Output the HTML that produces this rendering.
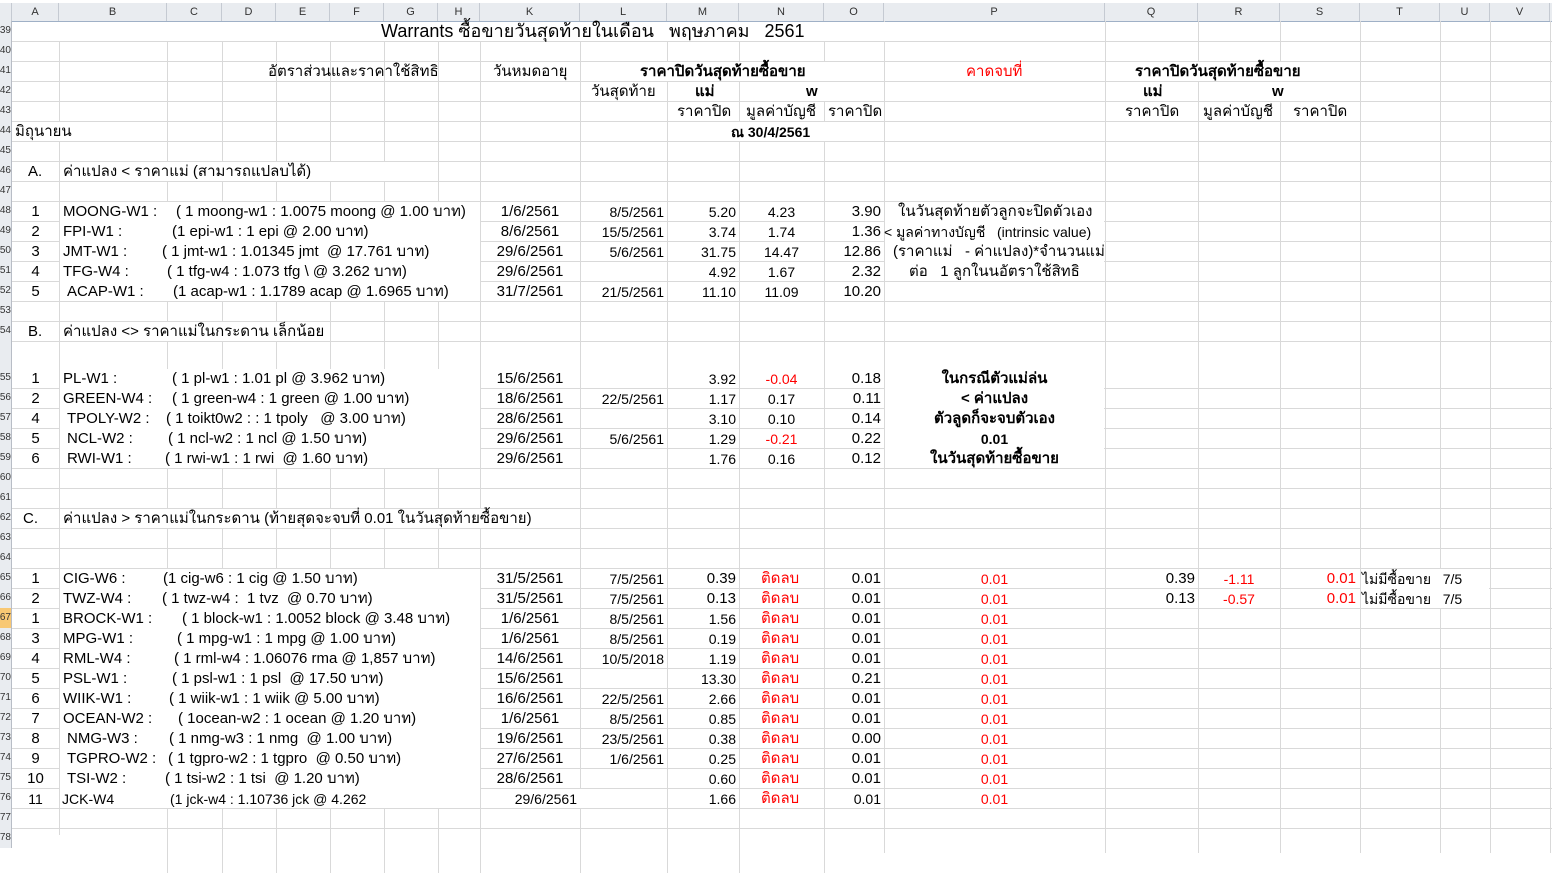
<!DOCTYPE html>
<html><head><meta charset="utf-8"><style>
body{margin:0;width:1552px;height:835px;overflow:hidden;background:#fff;position:relative;font-family:"Liberation Sans","DejaVu Sans",sans-serif;color:#000}
.v{position:absolute;top:3px;width:1px;height:832px;background:#d9d9d9}
.h{position:absolute;left:0;width:1552px;height:1px;background:#d9d9d9}
.t{position:absolute;height:20px;line-height:22px;font-size:15px;white-space:pre}
.n{font-size:14px}
.b{font-weight:bold}
.r{color:#f00}
.ch{position:absolute;top:3px;height:18px;line-height:19px;font-size:11px;color:#333;text-align:center;background:#e9ecf0;border-right:1px solid #c5cad2}
.rh{position:absolute;left:0;width:11px;height:20px;line-height:20px;font-size:10px;color:#333;background:#e9ecf0;border-right:1px solid #b8bdc6;overflow:hidden;text-align:right;direction:rtl}
</style></head><body>
<div style="position:absolute;left:0;top:0;width:1552px;height:3px;background:#fff;border-bottom:1px solid #a0a0a0"></div>
<div style="position:absolute;left:0;top:3px;width:1552px;height:18px;background:#e9ecf0;border-bottom:1px solid #9fb0c6"></div>
<div class="ch" style="left:0;width:11px"></div>
<div class="ch" style="left:12px;width:46px">A</div>
<div class="ch" style="left:59px;width:107px">B</div>
<div class="ch" style="left:167px;width:54px">C</div>
<div class="ch" style="left:222px;width:53px">D</div>
<div class="ch" style="left:276px;width:53px">E</div>
<div class="ch" style="left:330px;width:53px">F</div>
<div class="ch" style="left:384px;width:53px">G</div>
<div class="ch" style="left:438px;width:41px">H</div>
<div class="ch" style="left:480px;width:99px">K</div>
<div class="ch" style="left:580px;width:86px">L</div>
<div class="ch" style="left:667px;width:71px">M</div>
<div class="ch" style="left:739px;width:84px">N</div>
<div class="ch" style="left:824px;width:59px">O</div>
<div class="ch" style="left:884px;width:220px">P</div>
<div class="ch" style="left:1105px;width:92px">Q</div>
<div class="ch" style="left:1198px;width:81px">R</div>
<div class="ch" style="left:1280px;width:79px">S</div>
<div class="ch" style="left:1360px;width:79px">T</div>
<div class="ch" style="left:1440px;width:49px">U</div>
<div class="ch" style="left:1490px;width:59px">V</div>

<div class="v" style="left:59px;top:41px;height:794px"></div>
<div class="v" style="left:167px;top:41px"></div>
<div class="v" style="left:222px;top:41px"></div>
<div class="v" style="left:276px;top:41px"></div>
<div class="v" style="left:330px;top:41px"></div>
<div class="v" style="left:384px;top:41px"></div>
<div class="v" style="left:438px;top:41px"></div>
<div class="v" style="left:480px;top:41px"></div>
<div class="v" style="left:580px;top:41px"></div>
<div class="v" style="left:667px;top:41px"></div>
<div class="v" style="left:739px;top:41px"></div>
<div class="v" style="left:824px;top:41px"></div>
<div class="v" style="left:884px;top:21px"></div>
<div class="v" style="left:1105px;top:21px"></div>
<div class="v" style="left:1198px;top:21px"></div>
<div class="v" style="left:1280px;top:21px"></div>
<div class="v" style="left:1360px;top:21px"></div>
<div class="v" style="left:1440px;top:21px"></div>
<div class="v" style="left:1490px;top:21px"></div>
<div class="v" style="left:1550px;top:21px"></div>

<div class="h" style="top:41px"></div><div class="h" style="top:61px"></div><div class="h" style="top:81px"></div><div class="h" style="top:101px"></div><div class="h" style="top:121px"></div><div class="h" style="top:141px"></div><div class="h" style="top:161px"></div><div class="h" style="top:181px"></div><div class="h" style="top:201px"></div><div class="h" style="top:221px"></div><div class="h" style="top:241px"></div><div class="h" style="top:261px"></div><div class="h" style="top:281px"></div><div class="h" style="top:301px"></div><div class="h" style="top:321px"></div><div class="h" style="top:341px"></div><div class="h" style="top:388px"></div><div class="h" style="top:408px"></div><div class="h" style="top:428px"></div><div class="h" style="top:448px"></div><div class="h" style="top:468px"></div><div class="h" style="top:488px"></div><div class="h" style="top:508px"></div><div class="h" style="top:528px"></div><div class="h" style="top:548px"></div><div class="h" style="top:568px"></div><div class="h" style="top:588px"></div><div class="h" style="top:608px"></div><div class="h" style="top:628px"></div><div class="h" style="top:648px"></div><div class="h" style="top:668px"></div><div class="h" style="top:688px"></div><div class="h" style="top:708px"></div><div class="h" style="top:728px"></div><div class="h" style="top:748px"></div><div class="h" style="top:768px"></div><div class="h" style="top:788px"></div><div class="h" style="top:808px"></div><div class="h" style="top:828px"></div>

<div class="rh" style="top:21px">39</div><div class="rh" style="top:41px">40</div><div class="rh" style="top:61px">41</div><div class="rh" style="top:81px">42</div><div class="rh" style="top:101px">43</div><div class="rh" style="top:121px">44</div><div class="rh" style="top:141px">45</div><div class="rh" style="top:161px">46</div><div class="rh" style="top:181px">47</div><div class="rh" style="top:201px">48</div><div class="rh" style="top:221px">49</div><div class="rh" style="top:241px">50</div><div class="rh" style="top:261px">51</div><div class="rh" style="top:281px">52</div><div class="rh" style="top:301px">53</div><div class="rh" style="top:321px">54</div><div class="rh" style="top:341px;height:47px;line-height:74px">55</div><div class="rh" style="top:388px">56</div><div class="rh" style="top:408px">57</div><div class="rh" style="top:428px">58</div><div class="rh" style="top:448px">59</div><div class="rh" style="top:468px">60</div><div class="rh" style="top:488px">61</div><div class="rh" style="top:508px">62</div><div class="rh" style="top:528px">63</div><div class="rh" style="top:548px">64</div><div class="rh" style="top:568px">65</div><div class="rh" style="top:588px">66</div><div class="rh" style="top:608px;background:#f8c874">67</div><div class="rh" style="top:628px">68</div><div class="rh" style="top:648px">69</div><div class="rh" style="top:668px">70</div><div class="rh" style="top:688px">71</div><div class="rh" style="top:708px">72</div><div class="rh" style="top:728px">73</div><div class="rh" style="top:748px">74</div><div class="rh" style="top:768px">75</div><div class="rh" style="top:788px">76</div><div class="rh" style="top:808px">77</div><div class="rh" style="top:828px">78</div>

<div style="position:absolute;left:13px;top:22px;width:1090px;height:19px;background:#fff"></div>
<div class="t" style="left:381px;top:20px;font-size:18px">Warrants ซื้อขายวันสุดท้ายในเดือน   พฤษภาคม   2561</div>
<div class="t" style="left:268px;top:61px">อัตราส่วนและราคาใช้สิทธิ</div>
<div class="t" style="left:493px;top:61px">วันหมดอายุ</div>
<div style="position:absolute;left:581px;top:62px;width:302px;height:19px;background:#fff"></div>
<div class="t b" style="left:640px;top:61px">ราคาปิดวันสุดท้ายซื้อขาย</div>
<div class="t r" style="left:966px;top:61px">คาดจบที่</div>
<div style="position:absolute;left:1106px;top:62px;width:253px;height:19px;background:#fff"></div>
<div class="t b" style="left:1135px;top:61px">ราคาปิดวันสุดท้ายซื้อขาย</div>
<div class="t" style="left:591px;top:81px">วันสุดท้าย</div>
<div style="position:absolute;left:740px;top:82px;width:143px;height:19px;background:#fff"></div>
<div class="t b" style="left:695px;top:81px">แม่</div>
<div class="t b" style="left:806px;top:81px">w</div>
<div class="t b" style="left:1143px;top:81px">แม่</div>
<div style="position:absolute;left:1199px;top:82px;width:160px;height:19px;background:#fff"></div>
<div class="t b" style="left:1272px;top:81px">w</div>
<div class="t" style="left:677px;top:101px">ราคาปิด</div>
<div class="t" style="left:746px;top:101px">มูลค่าบัญชี</div>
<div class="t" style="left:828px;top:101px">ราคาปิด</div>
<div class="t" style="left:1125px;top:101px">ราคาปิด</div>
<div class="t" style="left:1203px;top:101px">มูลค่าบัญชี</div>
<div class="t" style="left:1293px;top:101px">ราคาปิด</div>
<div style="position:absolute;left:13px;top:122px;width:120px;height:19px;background:#fff"></div>
<div class="t" style="left:15px;top:121px">มิถุนายน</div>
<div style="position:absolute;left:668px;top:122px;width:215px;height:19px;background:#fff"></div>
<div class="t b n" style="left:731px;top:121px">ณ 30/4/2561</div>

<div style="position:absolute;left:60px;top:162px;width:360px;height:19px;background:#fff"></div>
<div class="t" style="left:28px;top:161px">A.</div>
<div class="t" style="left:63px;top:161px">ค่าแปลง &lt; ราคาแม่ (สามารถแปลบได้)</div>

<div style="position:absolute;left:60px;top:202px;width:420px;height:99px;background:#fff"></div>
<div style="position:absolute;left:885px;top:202px;width:219px;height:79px;background:#fff"></div>

<div class="t" style="left:12px;width:47px;text-align:center;top:201px">1</div>
<div class="t" style="left:12px;width:47px;text-align:center;top:221px">2</div>
<div class="t" style="left:12px;width:47px;text-align:center;top:241px">3</div>
<div class="t" style="left:12px;width:47px;text-align:center;top:261px">4</div>
<div class="t" style="left:12px;width:47px;text-align:center;top:281px">5</div>
<div class="t" style="left:63px;top:201px">MOONG-W1 :</div><div class="t" style="left:176px;top:201px">( 1 moong-w1 : 1.0075 moong @ 1.00 บาท)</div>
<div class="t" style="left:63px;top:221px">FPI-W1 :</div><div class="t" style="left:172px;top:221px">(1 epi-w1 : 1 epi @ 2.00 บาท)</div>
<div class="t" style="left:63px;top:241px">JMT-W1 :</div><div class="t" style="left:162px;top:241px">( 1 jmt-w1 : 1.01345 jmt  @ 17.761 บาท)</div>
<div class="t" style="left:63px;top:261px">TFG-W4 :</div><div class="t" style="left:167px;top:261px">( 1 tfg-w4 : 1.073 tfg \ @ 3.262 บาท)</div>
<div class="t" style="left:67px;top:281px">ACAP-W1 :</div><div class="t" style="left:173px;top:281px">(1 acap-w1 : 1.1789 acap @ 1.6965 บาท)</div>

<div class="t" style="left:480px;width:100px;text-align:center;top:201px">1/6/2561</div>
<div class="t" style="left:480px;width:100px;text-align:center;top:221px">8/6/2561</div>
<div class="t" style="left:480px;width:100px;text-align:center;top:241px">29/6/2561</div>
<div class="t" style="left:480px;width:100px;text-align:center;top:261px">29/6/2561</div>
<div class="t" style="left:480px;width:100px;text-align:center;top:281px">31/7/2561</div>
<div class="t n" style="left:580px;width:84px;text-align:right;top:201px">8/5/2561</div>
<div class="t n" style="left:580px;width:84px;text-align:right;top:221px">15/5/2561</div>
<div class="t n" style="left:580px;width:84px;text-align:right;top:241px">5/6/2561</div>
<div class="t n" style="left:580px;width:84px;text-align:right;top:281px">21/5/2561</div>
<div class="t n" style="left:667px;width:69px;text-align:right;top:201px">5.20</div>
<div class="t n" style="left:667px;width:69px;text-align:right;top:221px">3.74</div>
<div class="t n" style="left:667px;width:69px;text-align:right;top:241px">31.75</div>
<div class="t n" style="left:667px;width:69px;text-align:right;top:261px">4.92</div>
<div class="t n" style="left:667px;width:69px;text-align:right;top:281px">11.10</div>
<div class="t n" style="left:739px;width:85px;text-align:center;top:201px">4.23</div>
<div class="t n" style="left:739px;width:85px;text-align:center;top:221px">1.74</div>
<div class="t n" style="left:739px;width:85px;text-align:center;top:241px">14.47</div>
<div class="t n" style="left:739px;width:85px;text-align:center;top:261px">1.67</div>
<div class="t n" style="left:739px;width:85px;text-align:center;top:281px">11.09</div>
<div class="t" style="left:824px;width:57px;text-align:right;top:201px">3.90</div>
<div class="t" style="left:824px;width:57px;text-align:right;top:221px">1.36</div>
<div class="t" style="left:824px;width:57px;text-align:right;top:241px">12.86</div>
<div class="t" style="left:824px;width:57px;text-align:right;top:261px">2.32</div>
<div class="t" style="left:824px;width:57px;text-align:right;top:281px">10.20</div>
<div class="t" style="left:898px;top:201px">ในวันสุดท้ายตัวลูกจะปิดตัวเอง</div>
<div class="t n" style="left:884px;top:221px">&lt; มูลค่าทางบัญชี   (intrinsic value)</div>
<div class="t" style="left:893px;top:241px">(ราคาแม่   - ค่าแปลง)*จำนวนแม่</div>
<div class="t" style="left:909px;top:261px">ต่อ   1 ลูกในนอัตราใช้สิทธิ</div>

<div style="position:absolute;left:60px;top:322px;width:270px;height:19px;background:#fff"></div>
<div class="t" style="left:28px;top:321px">B.</div>
<div class="t" style="left:63px;top:321px">ค่าแปลง &lt;&gt; ราคาแม่ในกระดาน เล็กน้อย</div>
<div style="position:absolute;left:60px;top:369px;width:420px;height:99px;background:#fff"></div>
<div style="position:absolute;left:885px;top:369px;width:219px;height:99px;background:#fff"></div>
<div class="t" style="left:12px;width:47px;text-align:center;top:368px">1</div>
<div class="t" style="left:12px;width:47px;text-align:center;top:388px">2</div>
<div class="t" style="left:12px;width:47px;text-align:center;top:408px">4</div>
<div class="t" style="left:12px;width:47px;text-align:center;top:428px">5</div>
<div class="t" style="left:12px;width:47px;text-align:center;top:448px">6</div>
<div class="t" style="left:63px;top:368px">PL-W1 :</div><div class="t" style="left:172px;top:368px">( 1 pl-w1 : 1.01 pl @ 3.962 บาท)</div>
<div class="t" style="left:63px;top:388px">GREEN-W4 :</div><div class="t" style="left:172px;top:388px">( 1 green-w4 : 1 green @ 1.00 บาท)</div>
<div class="t" style="left:67px;top:408px">TPOLY-W2 :</div><div class="t" style="left:166px;top:408px">( 1 toikt0w2 : : 1 tpoly   @ 3.00 บาท)</div>
<div class="t" style="left:67px;top:428px">NCL-W2 :</div><div class="t" style="left:168px;top:428px">( 1 ncl-w2 : 1 ncl @ 1.50 บาท)</div>
<div class="t" style="left:67px;top:448px">RWI-W1 :</div><div class="t" style="left:165px;top:448px">( 1 rwi-w1 : 1 rwi  @ 1.60 บาท)</div>
<div class="t" style="left:480px;width:100px;text-align:center;top:368px">15/6/2561</div>
<div class="t" style="left:480px;width:100px;text-align:center;top:388px">18/6/2561</div>
<div class="t" style="left:480px;width:100px;text-align:center;top:408px">28/6/2561</div>
<div class="t" style="left:480px;width:100px;text-align:center;top:428px">29/6/2561</div>
<div class="t" style="left:480px;width:100px;text-align:center;top:448px">29/6/2561</div>
<div class="t n" style="left:580px;width:84px;text-align:right;top:388px">22/5/2561</div>
<div class="t n" style="left:580px;width:84px;text-align:right;top:428px">5/6/2561</div>
<div class="t n" style="left:667px;width:69px;text-align:right;top:368px">3.92</div>
<div class="t n" style="left:667px;width:69px;text-align:right;top:388px">1.17</div>
<div class="t n" style="left:667px;width:69px;text-align:right;top:408px">3.10</div>
<div class="t n" style="left:667px;width:69px;text-align:right;top:428px">1.29</div>
<div class="t n" style="left:667px;width:69px;text-align:right;top:448px">1.76</div>
<div class="t n r" style="left:739px;width:85px;text-align:center;top:368px">-0.04</div>
<div class="t n" style="left:739px;width:85px;text-align:center;top:388px">0.17</div>
<div class="t n" style="left:739px;width:85px;text-align:center;top:408px">0.10</div>
<div class="t n r" style="left:739px;width:85px;text-align:center;top:428px">-0.21</div>
<div class="t n" style="left:739px;width:85px;text-align:center;top:448px">0.16</div>
<div class="t" style="left:824px;width:57px;text-align:right;top:368px">0.18</div>
<div class="t" style="left:824px;width:57px;text-align:right;top:388px">0.11</div>
<div class="t" style="left:824px;width:57px;text-align:right;top:408px">0.14</div>
<div class="t" style="left:824px;width:57px;text-align:right;top:428px">0.22</div>
<div class="t" style="left:824px;width:57px;text-align:right;top:448px">0.12</div>
<div class="t b" style="left:884px;width:221px;text-align:center;top:368px">ในกรณีตัวแม่ล่น</div>
<div class="t b" style="left:884px;width:221px;text-align:center;top:388px">&lt; ค่าแปลง</div>
<div class="t b" style="left:884px;width:221px;text-align:center;top:408px">ตัวลูดก็จะจบตัวเอง</div>
<div class="t b n" style="left:884px;width:221px;text-align:center;top:428px">0.01</div>
<div class="t b" style="left:884px;width:221px;text-align:center;top:448px">ในวันสุดท้ายซื้อขาย</div>

<div style="position:absolute;left:60px;top:509px;width:480px;height:19px;background:#fff"></div>
<div class="t" style="left:23px;top:508px">C.</div>
<div class="t" style="left:63px;top:508px">ค่าแปลง &gt; ราคาแม่ในกระดาน (ท้ายสุดจะจบที่ 0.01 ในวันสุดท้ายซื้อขาย)</div>
<div style="position:absolute;left:60px;top:569px;width:420px;height:239px;background:#fff"></div>
<div style="position:absolute;left:1361px;top:569px;width:128px;height:39px;background:#fff"></div>

<div class="t" style="left:12px;width:47px;text-align:center;top:568px">1</div>
<div class="t" style="left:12px;width:47px;text-align:center;top:588px">2</div>
<div class="t" style="left:12px;width:47px;text-align:center;top:608px">1</div>
<div class="t" style="left:12px;width:47px;text-align:center;top:628px">3</div>
<div class="t" style="left:12px;width:47px;text-align:center;top:648px">4</div>
<div class="t" style="left:12px;width:47px;text-align:center;top:668px">5</div>
<div class="t" style="left:12px;width:47px;text-align:center;top:688px">6</div>
<div class="t" style="left:12px;width:47px;text-align:center;top:708px">7</div>
<div class="t" style="left:12px;width:47px;text-align:center;top:728px">8</div>
<div class="t" style="left:12px;width:47px;text-align:center;top:748px">9</div>
<div class="t" style="left:12px;width:47px;text-align:center;top:768px">10</div>
<div class="t n" style="left:12px;width:47px;text-align:center;top:788px">11</div>
<div class="t" style="left:63px;top:568px">CIG-W6 :</div><div class="t" style="left:163px;top:568px">(1 cig-w6 : 1 cig @ 1.50 บาท)</div>
<div class="t" style="left:63px;top:588px">TWZ-W4 :</div><div class="t" style="left:162px;top:588px">( 1 twz-w4 :  1 tvz  @ 0.70 บาท)</div>
<div class="t" style="left:63px;top:608px">BROCK-W1 :</div><div class="t" style="left:182px;top:608px">( 1 block-w1 : 1.0052 block @ 3.48 บาท)</div>
<div class="t" style="left:63px;top:628px">MPG-W1 :</div><div class="t" style="left:177px;top:628px">( 1 mpg-w1 : 1 mpg @ 1.00 บาท)</div>
<div class="t" style="left:63px;top:648px">RML-W4 :</div><div class="t" style="left:174px;top:648px">( 1 rml-w4 : 1.06076 rma @ 1,857 บาท)</div>
<div class="t" style="left:63px;top:668px">PSL-W1 :</div><div class="t" style="left:172px;top:668px">( 1 psl-w1 : 1 psl  @ 17.50 บาท)</div>
<div class="t" style="left:63px;top:688px">WIIK-W1 :</div><div class="t" style="left:169px;top:688px">( 1 wiik-w1 : 1 wiik @ 5.00 บาท)</div>
<div class="t" style="left:63px;top:708px">OCEAN-W2 :</div><div class="t" style="left:178px;top:708px">( 1ocean-w2 : 1 ocean @ 1.20 บาท)</div>
<div class="t" style="left:67px;top:728px">NMG-W3 :</div><div class="t" style="left:169px;top:728px">( 1 nmg-w3 : 1 nmg  @ 1.00 บาท)</div>
<div class="t" style="left:67px;top:748px">TGPRO-W2 :</div><div class="t" style="left:168px;top:748px">( 1 tgpro-w2 : 1 tgpro  @ 0.50 บาท)</div>
<div class="t" style="left:67px;top:768px">TSI-W2 :</div><div class="t" style="left:165px;top:768px">( 1 tsi-w2 : 1 tsi  @ 1.20 บาท)</div>
<div class="t n" style="left:62px;top:788px">JCK-W4</div><div class="t n" style="left:170px;top:788px">(1 jck-w4 : 1.10736 jck @ 4.262</div>

<div class="t" style="left:480px;width:100px;text-align:center;top:568px">31/5/2561</div>
<div class="t" style="left:480px;width:100px;text-align:center;top:588px">31/5/2561</div>
<div class="t" style="left:480px;width:100px;text-align:center;top:608px">1/6/2561</div>
<div class="t" style="left:480px;width:100px;text-align:center;top:628px">1/6/2561</div>
<div class="t" style="left:480px;width:100px;text-align:center;top:648px">14/6/2561</div>
<div class="t" style="left:480px;width:100px;text-align:center;top:668px">15/6/2561</div>
<div class="t" style="left:480px;width:100px;text-align:center;top:688px">16/6/2561</div>
<div class="t" style="left:480px;width:100px;text-align:center;top:708px">1/6/2561</div>
<div class="t" style="left:480px;width:100px;text-align:center;top:728px">19/6/2561</div>
<div class="t" style="left:480px;width:100px;text-align:center;top:748px">27/6/2561</div>
<div class="t" style="left:480px;width:100px;text-align:center;top:768px">28/6/2561</div>
<div style="position:absolute;left:481px;top:789px;width:185px;height:19px;background:#fff"></div>
<div class="t n" style="left:500px;width:77px;text-align:right;top:788px">29/6/2561</div>

<div class="t n" style="left:580px;width:84px;text-align:right;top:568px">7/5/2561</div>
<div class="t n" style="left:580px;width:84px;text-align:right;top:588px">7/5/2561</div>
<div class="t n" style="left:580px;width:84px;text-align:right;top:608px">8/5/2561</div>
<div class="t n" style="left:580px;width:84px;text-align:right;top:628px">8/5/2561</div>
<div class="t n" style="left:580px;width:84px;text-align:right;top:648px">10/5/2018</div>
<div class="t n" style="left:580px;width:84px;text-align:right;top:688px">22/5/2561</div>
<div class="t n" style="left:580px;width:84px;text-align:right;top:708px">8/5/2561</div>
<div class="t n" style="left:580px;width:84px;text-align:right;top:728px">23/5/2561</div>
<div class="t n" style="left:580px;width:84px;text-align:right;top:748px">1/6/2561</div>

<div class="t" style="left:667px;width:69px;text-align:right;top:568px">0.39</div>
<div class="t" style="left:667px;width:69px;text-align:right;top:588px">0.13</div>
<div class="t n" style="left:667px;width:69px;text-align:right;top:608px">1.56</div>
<div class="t n" style="left:667px;width:69px;text-align:right;top:628px">0.19</div>
<div class="t n" style="left:667px;width:69px;text-align:right;top:648px">1.19</div>
<div class="t n" style="left:667px;width:69px;text-align:right;top:668px">13.30</div>
<div class="t n" style="left:667px;width:69px;text-align:right;top:688px">2.66</div>
<div class="t n" style="left:667px;width:69px;text-align:right;top:708px">0.85</div>
<div class="t n" style="left:667px;width:69px;text-align:right;top:728px">0.38</div>
<div class="t n" style="left:667px;width:69px;text-align:right;top:748px">0.25</div>
<div class="t n" style="left:667px;width:69px;text-align:right;top:768px">0.60</div>
<div class="t n" style="left:667px;width:69px;text-align:right;top:788px">1.66</div>

<div class="t r" style="left:761px;top:568px">ติดลบ</div>
<div class="t r" style="left:761px;top:588px">ติดลบ</div>
<div class="t r" style="left:761px;top:608px">ติดลบ</div>
<div class="t r" style="left:761px;top:628px">ติดลบ</div>
<div class="t r" style="left:761px;top:648px">ติดลบ</div>
<div class="t r" style="left:761px;top:668px">ติดลบ</div>
<div class="t r" style="left:761px;top:688px">ติดลบ</div>
<div class="t r" style="left:761px;top:708px">ติดลบ</div>
<div class="t r" style="left:761px;top:728px">ติดลบ</div>
<div class="t r" style="left:761px;top:748px">ติดลบ</div>
<div class="t r" style="left:761px;top:768px">ติดลบ</div>
<div class="t r" style="left:761px;top:788px">ติดลบ</div>

<div class="t" style="left:824px;width:57px;text-align:right;top:568px">0.01</div>
<div class="t" style="left:824px;width:57px;text-align:right;top:588px">0.01</div>
<div class="t" style="left:824px;width:57px;text-align:right;top:608px">0.01</div>
<div class="t" style="left:824px;width:57px;text-align:right;top:628px">0.01</div>
<div class="t" style="left:824px;width:57px;text-align:right;top:648px">0.01</div>
<div class="t" style="left:824px;width:57px;text-align:right;top:668px">0.21</div>
<div class="t" style="left:824px;width:57px;text-align:right;top:688px">0.01</div>
<div class="t" style="left:824px;width:57px;text-align:right;top:708px">0.01</div>
<div class="t" style="left:824px;width:57px;text-align:right;top:728px">0.00</div>
<div class="t" style="left:824px;width:57px;text-align:right;top:748px">0.01</div>
<div class="t" style="left:824px;width:57px;text-align:right;top:768px">0.01</div>
<div class="t n" style="left:824px;width:57px;text-align:right;top:788px">0.01</div>

<div class="t n r" style="left:884px;width:221px;text-align:center;top:568px">0.01</div>
<div class="t n r" style="left:884px;width:221px;text-align:center;top:588px">0.01</div>
<div class="t n r" style="left:884px;width:221px;text-align:center;top:608px">0.01</div>
<div class="t n r" style="left:884px;width:221px;text-align:center;top:628px">0.01</div>
<div class="t n r" style="left:884px;width:221px;text-align:center;top:648px">0.01</div>
<div class="t n r" style="left:884px;width:221px;text-align:center;top:668px">0.01</div>
<div class="t n r" style="left:884px;width:221px;text-align:center;top:688px">0.01</div>
<div class="t n r" style="left:884px;width:221px;text-align:center;top:708px">0.01</div>
<div class="t n r" style="left:884px;width:221px;text-align:center;top:728px">0.01</div>
<div class="t n r" style="left:884px;width:221px;text-align:center;top:748px">0.01</div>
<div class="t n r" style="left:884px;width:221px;text-align:center;top:768px">0.01</div>
<div class="t n r" style="left:884px;width:221px;text-align:center;top:788px">0.01</div>

<div class="t" style="left:1105px;width:90px;text-align:right;top:568px">0.39</div>
<div class="t" style="left:1105px;width:90px;text-align:right;top:588px">0.13</div>
<div class="t n r" style="left:1198px;width:82px;text-align:center;top:568px">-1.11</div>
<div class="t n r" style="left:1198px;width:82px;text-align:center;top:588px">-0.57</div>
<div class="t r" style="left:1280px;width:76px;text-align:right;top:568px">0.01</div>
<div class="t r" style="left:1280px;width:76px;text-align:right;top:588px">0.01</div>
<div class="t n" style="left:1362px;top:568px">ไม่มีซื้อขาย   7/5</div>
<div class="t n" style="left:1362px;top:588px">ไม่มีซื้อขาย   7/5</div>
</body></html>
